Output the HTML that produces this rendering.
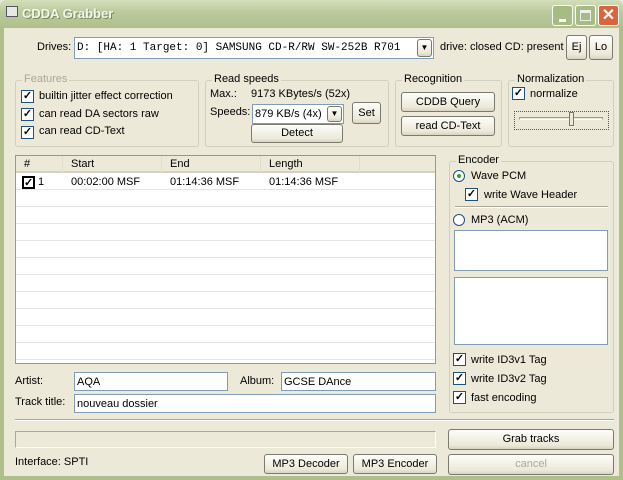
<!DOCTYPE html><html><head><style>
*{box-sizing:border-box;margin:0;padding:0}
body{width:623px;height:480px;overflow:hidden;background:#ece9d8;font-family:"Liberation Sans",sans-serif;font-size:11px;color:#000;position:relative}
.a{position:absolute}
.tb{left:0;top:0;width:623px;height:28px;background:linear-gradient(#d3dfbb,#bccb9e 40%,#afbf8c);border-radius:6px 6px 0 0}
.fr{background:#afbf8c}
.btn{position:absolute;background:linear-gradient(#fdfdfb,#ece9d8 80%,#d8d4c4);border:1px solid #7a7a6e;border-radius:3px;text-align:center;font-size:11px}
.grp{position:absolute;border:1px solid #d0d0bf;border-radius:3px}
.grp>.lg{position:absolute;top:-8px;left:6px;background:#ece9d8;padding:0 2px;font-size:11px}
.cb{position:absolute;width:13px;height:13px;border:1px solid #1c5180;background:#fff;font-size:11px;line-height:10px;text-align:center;font-weight:bold}
.ed{position:absolute;background:#fff;border:1px solid #7f9db9}
.t{position:absolute;white-space:nowrap}
.tbb{position:absolute;top:5px;width:21px;height:21px;border:1px solid #fff;border-radius:3px;background:#a6bc84}
</style></head><body>
<div class="a tb"></div>
<div class="a fr" style="left:0;top:28px;width:4px;height:452px"></div>
<div class="a fr" style="right:0;top:28px;width:4px;height:452px"></div>
<div class="a fr" style="left:0;top:476px;width:623px;height:4px"></div>
<div class="t" style="left:6px;top:6px;width:12px;height:11px;background:#e8e8e0;border:1px solid #556"></div>
<div class="t" style="left:22px;top:6px;color:#f4f6ee;font-size:13px;font-weight:bold;text-shadow:1px 1px #7a8a5a">CDDA Grabber</div>
<div class="tbb" style="left:552px"><div class="a" style="left:6px;top:13px;width:7px;height:3px;background:#fff"></div></div>
<div class="tbb" style="left:575px"><div class="a" style="left:4px;top:4px;width:11px;height:11px;border:1px solid #eee;border-top-width:3px"></div></div>
<div class="tbb" style="left:598px;background:#d8653f;color:#fff;font-size:16px;font-weight:bold;text-align:center;line-height:19px">✕</div>

<div class="t" style="left:37px;top:41px">Drives:</div>
<div class="ed" style="left:74px;top:37px;width:360px;height:22px;font-family:'Liberation Mono',monospace;font-size:11px;padding:4px 2px">D: [HA: 1 Target: 0] SAMSUNG CD-R/RW SW-252B R701</div>
<div class="btn" style="left:417px;top:39px;width:15px;height:18px;font-size:8px;line-height:16px">▼</div>
<div class="t" style="left:440px;top:41px">drive: closed CD: present</div>
<div class="btn" style="left:566px;top:35px;width:21px;height:25px;line-height:22px">Ej</div>
<div class="btn" style="left:589px;top:35px;width:24px;height:25px;line-height:22px">Lo</div>

<div class="grp" style="left:15px;top:80px;width:184px;height:67px"><span class="lg" style="color:#aca899">Features</span></div>
<div class="cb" style="left:21px;top:90px">✓</div><div class="t" style="left:39px;top:90px">builtin jitter effect correction</div>
<div class="cb" style="left:21px;top:108px">✓</div><div class="t" style="left:39px;top:108px">can read DA sectors raw</div>
<div class="cb" style="left:21px;top:126px">✓</div><div class="t" style="left:39px;top:125px">can read CD-Text</div>

<div class="grp" style="left:205px;top:80px;width:184px;height:67px"><span class="lg">Read speeds</span></div>
<div class="t" style="left:210px;top:88px">Max.:</div><div class="t" style="left:251px;top:88px">9173 KBytes/s (52x)</div>
<div class="t" style="left:210px;top:106px">Speeds:</div>
<div class="ed" style="left:252px;top:104px;width:92px;height:20px;padding:3px 2px">879 KB/s (4x)</div>
<div class="btn" style="left:327px;top:106px;width:15px;height:16px;font-size:8px;line-height:14px">▼</div>
<div class="btn" style="left:352px;top:102px;width:29px;height:22px;line-height:20px">Set</div>
<div class="btn" style="left:251px;top:124px;width:92px;height:19px;line-height:17px">Detect</div>

<div class="grp" style="left:395px;top:80px;width:107px;height:67px"><span class="lg">Recognition</span></div>
<div class="btn" style="left:401px;top:92px;width:94px;height:20px;line-height:18px">CDDB Query</div>
<div class="btn" style="left:401px;top:116px;width:94px;height:20px;line-height:18px">read CD-Text</div>

<div class="grp" style="left:508px;top:80px;width:106px;height:67px"><span class="lg">Normalization</span></div>
<div class="cb" style="left:512px;top:87px">✓</div><div class="t" style="left:530px;top:88px">normalize</div>
<div class="a" style="left:514px;top:111px;width:95px;height:19px;border:1px dotted #555"></div>
<div class="a" style="left:519px;top:117px;width:84px;height:3px;border:1px solid #999;border-bottom-color:#fff"></div>
<div class="a" style="left:569px;top:112px;width:5px;height:14px;background:#ece9d8;border:1px solid #777"></div>

<div class="a" style="left:15px;top:155px;width:421px;height:209px;background:#fff;border:1px solid #7f9db9;overflow:hidden">
<div class="a" style="left:0;top:0;width:421px;height:17px;background:#ece9d8;border-bottom:2px solid #d6d2c2"></div>
<div class="t" style="left:8px;top:2px">#</div><div class="t" style="left:55px;top:2px">Start</div><div class="t" style="left:154px;top:2px">End</div><div class="t" style="left:253px;top:2px">Length</div>
<div class="a" style="left:46px;top:0;width:1px;height:253px;background:#e0ddd0"></div>
<div class="a" style="left:145px;top:0;width:1px;height:253px;background:#e0ddd0"></div>
<div class="a" style="left:244px;top:0;width:1px;height:253px;background:#e0ddd0"></div>
<div class="a" style="left:343px;top:0;width:1px;height:253px;background:#e0ddd0"></div>
<div class="a" style="left:0;top:17px;width:421px;height:236px;background:repeating-linear-gradient(#fff 0 16px,#e4e4e4 16px 17px)"></div>
<div class="cb" style="left:6px;top:20px;border:2px solid #000">✓</div><div class="t" style="left:22px;top:20px">1</div>
<div class="t" style="left:55px;top:20px">00:02:00 MSF</div><div class="t" style="left:154px;top:20px">01:14:36 MSF</div><div class="t" style="left:253px;top:20px">01:14:36 MSF</div>
</div>

<div class="t" style="left:15px;top:375px">Artist:</div>
<div class="ed" style="left:74px;top:372px;width:154px;height:19px;padding:3px 2px">AQA</div>
<div class="t" style="left:240px;top:375px">Album:</div>
<div class="ed" style="left:281px;top:372px;width:155px;height:19px;padding:3px 2px">GCSE DAnce</div>
<div class="t" style="left:15px;top:396px">Track title:</div>
<div class="ed" style="left:74px;top:394px;width:362px;height:19px;padding:3px 2px">nouveau dossier</div>

<div class="grp" style="left:449px;top:161px;width:165px;height:252px"><span class="lg">Encoder</span></div>
<div class="a" style="left:453px;top:170px;width:12px;height:12px;border-radius:50%;border:1px solid #1c5180;background:#fff"><div class="a" style="left:3px;top:3px;width:4px;height:4px;border-radius:50%;background:#2a2"></div></div>
<div class="t" style="left:471px;top:170px">Wave PCM</div>
<div class="cb" style="left:465px;top:188px">✓</div><div class="t" style="left:484px;top:189px">write Wave Header</div>
<div class="a" style="left:455px;top:206px;width:153px;height:2px;border-top:1px solid #aca899;border-bottom:1px solid #fff"></div>
<div class="a" style="left:453px;top:214px;width:12px;height:12px;border-radius:50%;border:1px solid #1c5180;background:#fff"></div>
<div class="t" style="left:471px;top:214px">MP3 (ACM)</div>
<div class="ed" style="left:454px;top:230px;width:154px;height:41px"></div>
<div class="ed" style="left:454px;top:277px;width:154px;height:68px"></div>
<div class="cb" style="left:453px;top:353px">✓</div><div class="t" style="left:471px;top:354px">write ID3v1 Tag</div>
<div class="cb" style="left:453px;top:372px">✓</div><div class="t" style="left:471px;top:373px">write ID3v2 Tag</div>
<div class="cb" style="left:453px;top:391px">✓</div><div class="t" style="left:471px;top:392px">fast encoding</div>

<div class="a" style="left:15px;top:419px;width:599px;height:2px;border-top:1px solid #aca899;border-bottom:1px solid #fff"></div>
<div class="a" style="left:15px;top:431px;width:421px;height:17px;border:1px solid #aca899;border-right-color:#fff;border-bottom-color:#fff"></div>
<div class="t" style="left:15px;top:456px">Interface: SPTI</div>
<div class="btn" style="left:264px;top:454px;width:84px;height:20px;line-height:18px">MP3 Decoder</div>
<div class="btn" style="left:353px;top:454px;width:84px;height:20px;line-height:18px">MP3 Encoder</div>
<div class="btn" style="left:448px;top:429px;width:166px;height:21px;line-height:19px">Grab tracks</div>
<div class="btn" style="left:448px;top:454px;width:166px;height:21px;line-height:19px;color:#aca899">cancel</div>
</body></html>
